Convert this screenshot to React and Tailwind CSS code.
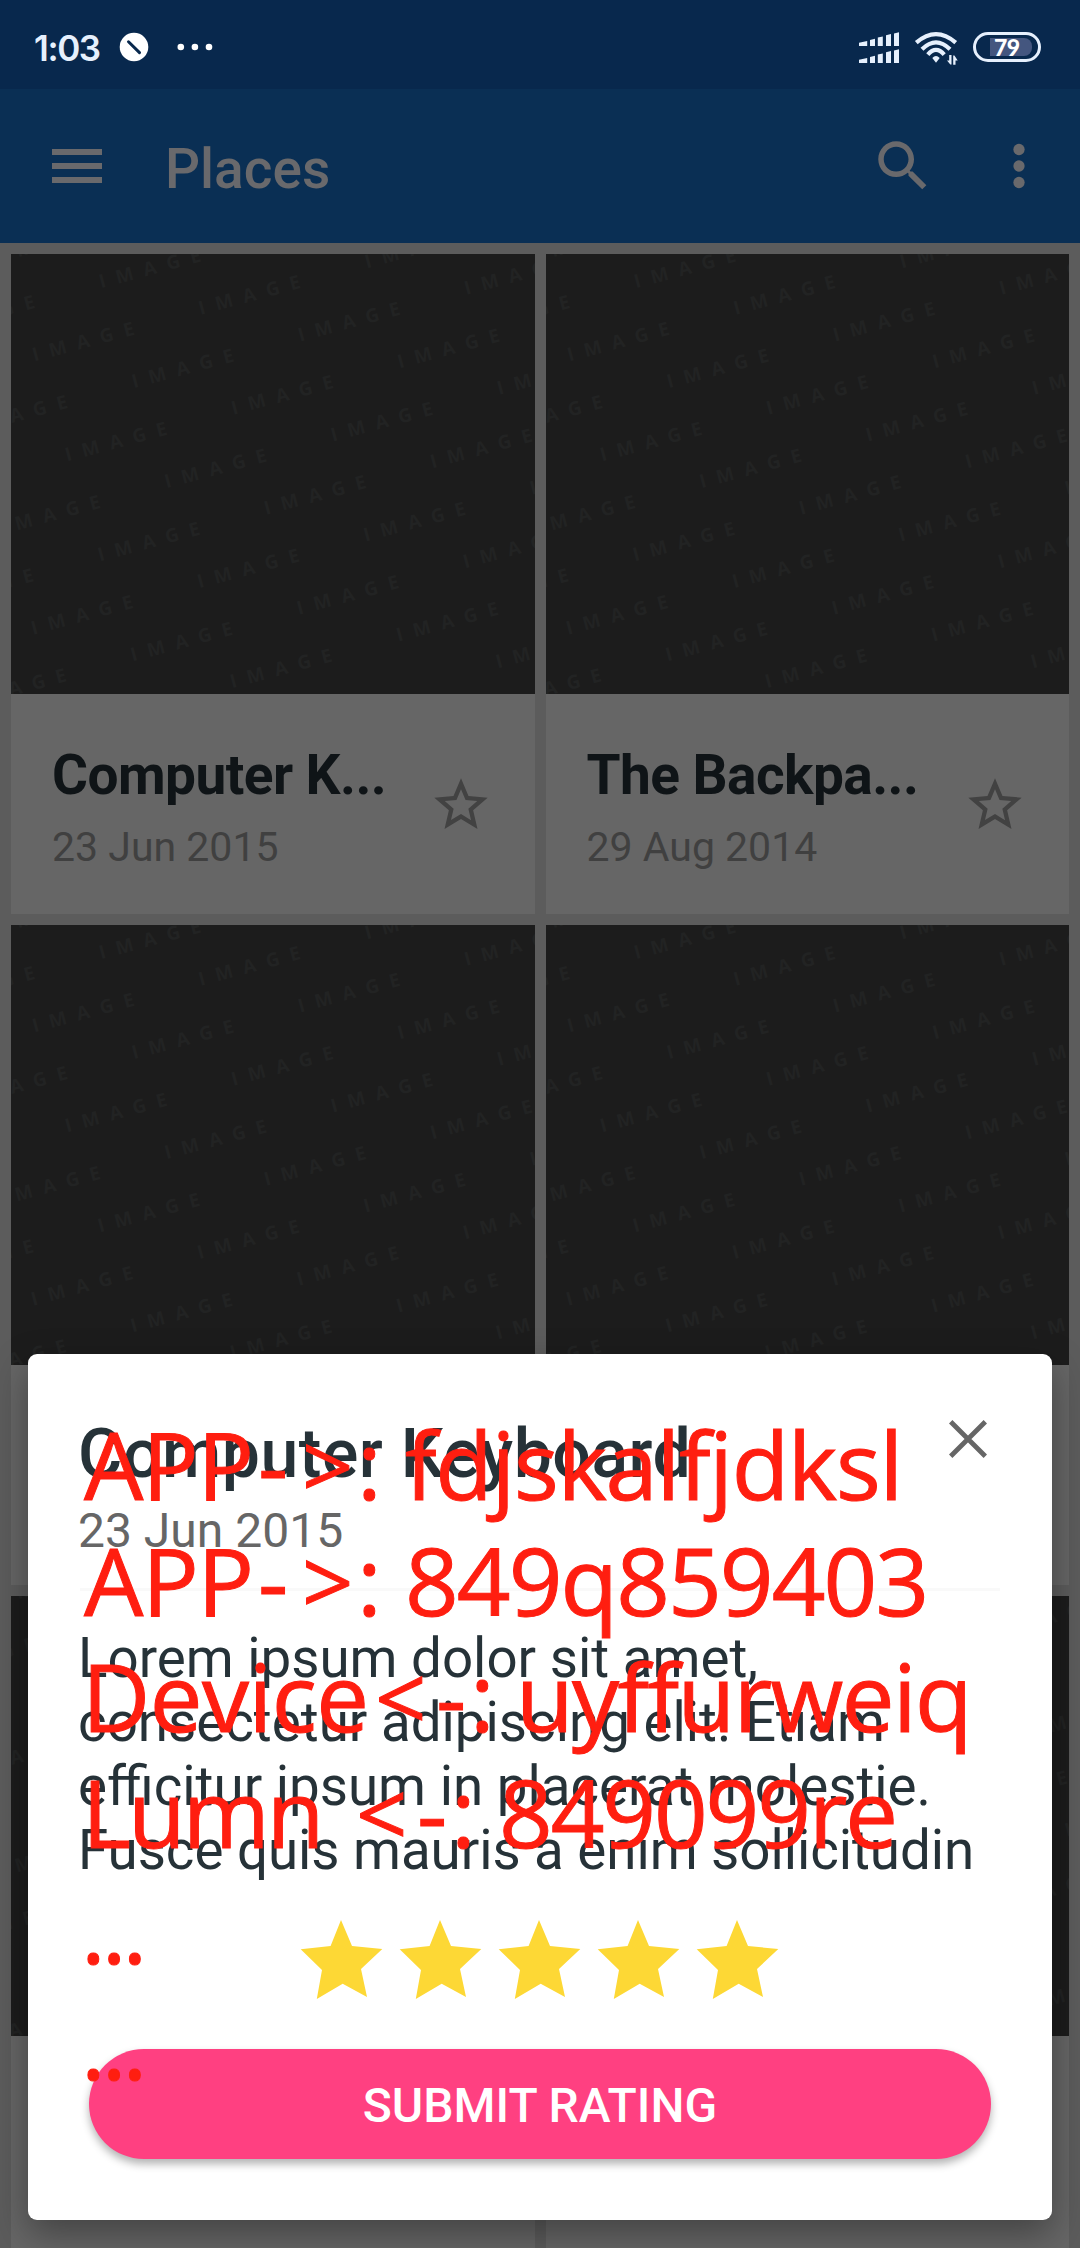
import React from "react";

const places = [
  { title: "Computer K...", date: "23 Jun 2015" },
  { title: "The Backpa...", date: "29 Aug 2014" },
  { title: "", date: "" },
  { title: "", date: "" },
  { title: "", date: "" },
  { title: "", date: "" },
];

const words = [];
for (let j = -2; j < 6; j++) {
  for (let i = -4; i < 6; i++) {
    const x = 90 + i * 99.6 + j * 32.8;
    const y = 34.3 + i * 26.7 + j * 100;
    if (x > -120 && x < 540 && y > -10 && y < 455) words.push([x, y]);
  }
}

function Placeholder() {
  return (
    <svg className="block h-[440px] w-full bg-[#1c1c1c]" viewBox="0 0 524 440" preserveAspectRatio="none">
      {words.map(([x, y], k) => (
        <text
          key={k}
          transform={`translate(${x} ${y}) rotate(-15)`}
          className="fill-[#222323] font-['Open_Sans',sans-serif] text-[19px] font-bold tracking-[10.8px]"
        >
          IMAGE
        </text>
      ))}
    </svg>
  );
}

function Card({ place }) {
  return (
    <div className="h-[660px] bg-[#666666]">
      <Placeholder />
      {place.title && (
        <div className="flex h-[220px] justify-between pl-[41px] pr-[42px]">
          <div className="pt-[48px]">
            <div className="h-[66px] whitespace-nowrap text-[55px] font-bold leading-[66px] tracking-[-0.55px] text-[#0f1417]">
              {place.title}
            </div>
            <div className="mt-[15px] h-[48px] whitespace-nowrap text-[41px] leading-[48px] text-[#404040]">{place.date}</div>
          </div>
          <svg className="mt-[79px] h-[64px] w-[64px] shrink-0 fill-[#424242]" viewBox="0 0 24 24">
            <path d="M22 9.24l-7.19-.62L12 2 9.19 8.63 2 9.24l5.46 4.73L5.82 21 12 17.27 18.18 21l-1.63-7.03L22 9.24zM12 15.4l-3.76 2.27 1-4.28-3.32-2.88 4.38-.38L12 6.1l1.71 4.04 4.38.38-3.32 2.88 1 4.28L12 15.4z" />
          </svg>
        </div>
      )}
    </div>
  );
}

function StatusBar() {
  return (
    <div className="flex h-[89px] items-center bg-[#08284d] text-[#e6f0fd]">
      <span className="ml-[34px] mt-[6px] w-[84px] font-['Inter',sans-serif] text-[35px] font-semibold leading-[40px] tracking-[-1.4px]">
        1:03
      </span>
      <svg className="mt-[4px] h-[30px] w-[96px]" viewBox="118 32 96 30">
        <circle cx="134" cy="47" r="14.3" fill="#fff" />
        <path d="M128.5 41.8l11 10.8" stroke="#08284d" strokeWidth="3" strokeLinecap="round" />
        <circle cx="180.8" cy="47" r="3.3" fill="#fff" />
        <circle cx="194.9" cy="47" r="3.3" fill="#fff" />
        <circle cx="209" cy="47" r="3.3" fill="#fff" />
      </svg>
      <svg className="ml-auto mt-[9px] h-[36px] w-[104px]" viewBox="857 31 104 36" fill="#e6f0fd">
        <path d="M859 42.8l8.2-1.8v5h-8.2zM870 40l5-1.2V46h-5zM877.8 37.6l5-1.2V46h-5zM886 35.2l5-1.3V46h-5zM894 33.4l5-1.2V46h-5z" />
        <path d="M859 59.8l8.2-1.8v5h-8.2zM870 57l5-1.2V63h-5zM877.8 54.6l5-1.2V63h-5zM886 52.2l5-1.3V63h-5zM894 50.4l5-1.2V63h-5z" />
        <g fill="none" stroke="#e6f0fd" strokeWidth="4.2">
          <path d="M916.3 42.6Q936 25.6 955.7 42.6" />
          <path d="M922 49.2Q936 35.6 950 49.2" />
          <path d="M927.8 54.6Q936 45.2 944.2 54.6" />
        </g>
        <path d="M932.3 58Q936 53.8 939.7 58L936 62.8z" />
        <path d="M949.2 55h2.3v9.6h-1.2l-3.3-4.2h2.2zM953.2 64.8h2.3v-4.2h2.2l-3.3-5.2h-1.2z" />
      </svg>
      <div className="relative ml-[12px] mr-[39px] mt-[5px] flex h-[30px] w-[68px] items-center rounded-full border-[3px] border-[#e6f0fd]">
        <div className="ml-[14px] h-[18px] w-[42px] rounded-r-[8px] bg-[#44567f]" />
        <span className="absolute left-[18px] top-0 font-['Lato',sans-serif] text-[23px] font-black leading-[25px] tracking-[-0.6px] text-white">
          79
        </span>
      </div>
    </div>
  );
}

function AppBar() {
  return (
    <div className="flex h-[154px] items-center bg-[#0a2f54] pl-[52px] pr-[28px]">
      <div className="flex w-[50px] flex-col gap-[8px]">
        <div className="h-[6px] bg-[#69696c]" />
        <div className="h-[6px] bg-[#69696c]" />
        <div className="h-[6px] bg-[#69696c]" />
      </div>
      <div className="ml-[63px] mt-[6px] text-[55px] font-medium leading-[66px] text-[#69696c]">Places</div>
      <svg className="ml-auto h-[66px] w-[66px] fill-[#69696c]" viewBox="0 0 24 24">
        <path d="M15.5 14h-.79l-.28-.27C15.41 12.59 16 11.11 16 9.5 16 5.91 13.09 3 9.5 3S3 5.91 3 9.5 5.91 16 9.5 16c1.61 0 3.09-.59 4.23-1.57l.27.28v.79l5 4.99L20.49 19l-4.99-5zm-6 0C7.01 14 5 11.99 5 9.5S7.01 5 9.5 5 14 7.01 14 9.5 11.99 14 9.5 14z" />
      </svg>
      <svg className="ml-[50px] h-[66px] w-[66px] fill-[#69696c]" viewBox="0 0 24 24">
        <circle cx="12" cy="6" r="2.05" />
        <circle cx="12" cy="12" r="2.05" />
        <circle cx="12" cy="18" r="2.05" />
      </svg>
    </div>
  );
}

function RatingDialog() {
  return (
    <div className="absolute left-[28px] top-[1354px] h-[866px] w-[1024px] rounded-[9px] bg-white pl-[50px] shadow-[0_14px_36px_rgba(0,0,0,0.35)]">
      <div className="flex justify-between pr-[65px] pt-[61px]">
        <div className="h-[78px] whitespace-nowrap text-[68px] font-medium leading-[78px] tracking-[0.5px] text-[#263238]">Computer Keyboard</div>
        <svg className="mt-[5px] h-[38px] w-[38px]" viewBox="0 0 38 38" stroke="#666" strokeWidth="4.8">
          <path d="M1.7 1.7l34.6 34.6M36.3 1.7L1.7 36.3" />
        </svg>
      </div>
      <div className="mt-[10px] h-[56px] text-[48px] leading-[56px] text-[#666666]">23 Jun 2015</div>
      <div className="ml-[2px] mt-[29px] h-[3px] w-[920px] bg-[#f9f9f9]" />
      <div className="mt-[35px] h-[256px] whitespace-nowrap text-[54.7px] leading-[64px] text-[#263238]">
        <div>Lorem ipsum dolor sit amet,</div>
        <div>consectetur adipiscing elit. Etiam</div>
        <div>efficitur ipsum in placerat molestie.</div>
        <div className="tracking-[-0.05px]">Fusce quis mauris a enim sollicitudin</div>
      </div>
      <div className="ml-[222px] mt-[38px] flex h-[80px]">
        {[0, 1, 2, 3, 4].map((n) => (
          <svg key={n} className="h-[80px] w-[99px] shrink-0 fill-[#fdd835]" viewBox="0 0 99 80">
            <path d="M41 0L52 26 82.3 29 61 49 67 77 42.7 63.7 16.8 79 22 50 .7 29.3 30.6 26z" />
          </svg>
        ))}
      </div>
      <button className="ml-[11px] mt-[49px] flex h-[110px] w-[902px] items-center justify-center rounded-full bg-[#ff4081] pt-[3px] text-[48px] font-medium text-white shadow-[0_5px_9px_rgba(0,0,0,0.3)]">
        SUBMIT RATING
      </button>
    </div>
  );
}

function DebugLog() {
  return (
    <div className="absolute left-0 top-[1406px] whitespace-pre font-['Open_Sans',sans-serif] text-[94px] leading-[116px] text-[#ff1e10] [-webkit-text-stroke:1px_#ff1e10]">
      <div className="flex h-[116px] pl-[84px]">
        <span className="w-[174px] tracking-[-1.2px]">APP</span>
        <span className="w-[44px]">-</span>
        <span className="w-[55px] text-[90px]">&gt;</span>
        <span className="w-[48px]">: </span>
        <span className="tracking-[-1.3px]">fdjskalfjdksl</span>
      </div>
      <div className="flex h-[116px] pl-[84px]">
        <span className="w-[174px] tracking-[-1.2px]">APP</span>
        <span className="w-[44px]">-</span>
        <span className="w-[55px] text-[90px]">&gt;</span>
        <span className="w-[48px]">: </span>
        <span className="tracking-[-1.9px]">849q859403</span>
      </div>
      <div className="flex h-[116px] pl-[82px]">
        <span className="w-[293px] tracking-[-0.5px]">Device</span>
        <span className="w-[61px] text-[90px]">&lt;</span>
        <span className="w-[34px]">-</span>
        <span className="w-[46px]">: </span>
        <span className="tracking-[-1.6px]">uyffurweiq</span>
      </div>
      <div className="flex h-[116px] pl-[82px]">
        <span className="w-[274px] tracking-[-3px]">Lumn </span>
        <span className="w-[61px] text-[90px]">&lt;</span>
        <span className="w-[34px]">-</span>
        <span className="w-[48px]">: </span>
        <span className="tracking-[-2.1px]">849099re</span>
      </div>
      <div className="h-[116px] pl-[81px] tracking-[-4px]">...</div>
      <div className="h-[116px] pl-[81px] tracking-[-4px]">...</div>
    </div>
  );
}

export default function App() {
  return (
    <div className="relative h-[2248px] w-[1080px] overflow-hidden bg-[#5c5c5c] font-['Roboto',sans-serif]">
      <StatusBar />
      <AppBar />
      <div className="grid grid-cols-2 gap-[11px] p-[11px]">
        {places.map((p, i) => (
          <Card key={i} place={p} />
        ))}
      </div>
      <RatingDialog />
      <DebugLog />
    </div>
  );
}
